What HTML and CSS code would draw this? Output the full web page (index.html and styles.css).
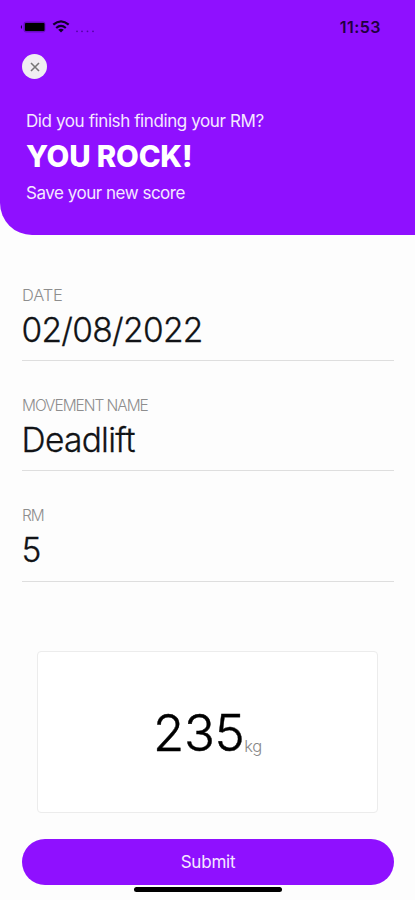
FILE: index.html
```html
<!DOCTYPE html>
<html lang="en">
<head>
<meta charset="utf-8">
<title>Save your new score</title>
<link rel="stylesheet" href="styles.css">
</head>
<body>
<main class="screen">
  <header class="hero">
    <div class="status">
      <svg class="status-icons" width="76" height="18" viewBox="0 0 76 18">
        <rect x="1.500" y="2.500" width="22" height="11" rx="3" fill="#24004c" fill-opacity=".35"/>
        <rect x="3" y="4" width="19.500" height="8" rx="1" fill="#000"/>
        <path d="M0 6v4Q-2.500 8 0 6z" fill="#24004c"/>
        <g fill="none" stroke="#12002a" stroke-width="2.200">
          <path d="M31.300 5.700Q39 -1 46.700 5.700"/>
          <path d="M34.200 9Q39 4.900 43.800 9"/>
        </g>
        <path d="M36.200 10.700Q39 8.800 41.800 10.700L39 13.600z" fill="#12002a"/>
        <g fill="#5300a3"><circle cx="55" cy="12.300" r=".9"/><circle cx="60" cy="12.300" r=".9"/><circle cx="65.500" cy="12.300" r=".9"/><circle cx="71" cy="12.300" r=".9"/></g>
      </svg>
      <span class="clock">11:53</span>
    </div>
    <button class="close" aria-label="Close">
      <svg width="10" height="10" viewBox="0 0 10 10"><path d="M1 1l8 8M9 1l-8 8" stroke="#777" stroke-width="1.600"/></svg>
    </button>
    <p class="question">Did you finish finding your RM?</p>
    <h1>YOU ROCK!</h1>
    <p class="save">Save your new score</p>
  </header>
  <section class="fields">
    <div class="field"><span class="label date-label">DATE</span><span class="value">02/08/2022</span></div>
    <div class="field"><span class="label">MOVEMENT NAME</span><span class="value">Deadlift</span></div>
    <div class="field last"><span class="label">RM</span><span class="value">5</span></div>
  </section>
  <section class="score"><span class="weight">235</span><span class="unit">kg</span></section>
  <button class="submit">Submit</button>
  <div class="home"></div>
</main>
</body>
</html>
```
FILE: styles.css
```css
* { box-sizing: border-box; }
body { margin: 0; background: #fdfdfd; font-family: Inter, sans-serif; }
button { border: 0; padding: 0; font-family: inherit; }
.screen { height: 900px; display: flex; flex-direction: column; overflow: hidden; }
.hero { height: 235px; flex: none; background: #8f10ff; border-bottom-left-radius: 32px; padding: 19px 34px 0 22px; color: #f5e8ff; }
.status { height: 18px; display: flex; justify-content: space-between; }
.status-icons { display: block; overflow: visible; }
.clock { font-size: 16px; line-height: 16px; font-weight: 600; letter-spacing: .5px; color: #21003f; }
.close { display: flex; align-items: center; justify-content: center; width: 25px; height: 25px; margin-top: 17px; border-radius: 50%; background: #f0eef2; }
.hero p, h1 { margin: 0 0 0 4px; white-space: nowrap; }
.question, .save { font-size: 17px; line-height: 20px; letter-spacing: -.4px; }
.hero .question { margin-top: 32px; }
h1 { font-size: 29.500px; line-height: 50px; font-weight: 800; letter-spacing: -.2px; color: #fff; }
.hero .save { margin-top: 2px; letter-spacing: -.48px; }
.fields { padding: 50px 21px 0 22px; }
.field { height: 110.300px; display: flex; flex-direction: column; }
.label { font-size: 15.500px; line-height: 21px; font-weight: 300; letter-spacing: -1.050px; color: #8e8e8e; }
.date-label { font-size: 16.500px; letter-spacing: -.2px; }
.value { height: 55px; font-size: 33.500px; line-height: 48px; font-weight: 300; -webkit-text-stroke: .3px #111316; letter-spacing: -.7px; text-indent: -.5px; color: #111316; border-bottom: 1px solid #dedede; }
.last .label { line-height: 20px; }
.last .value { height: 56px; }
.score { width: 341px; height: 162px; flex: none; margin: 35px 0 0 37px; border: 1px solid #ececec; border-radius: 4px; background: #fff; display: flex; align-items: baseline; justify-content: center; padding-top: 50px; }
.weight { font-size: 51px; line-height: 62px; font-weight: 300; -webkit-text-stroke: .4px #000; letter-spacing: -.4px; color: #000; }
.unit { position: relative; top: 1px; font-size: 16.500px; font-weight: 300; letter-spacing: -.3px; color: #888; }
.submit { height: 46px; flex: none; margin: 26px 21px 0 22px; border-radius: 23px; background: #8f10ff; color: #f5e8ff; font-size: 17px; letter-spacing: -.2px; }
.home { flex: none; width: 148px; height: 5px; margin: 2px 0 0 134px; border-radius: 3px; background: #000; }
```
